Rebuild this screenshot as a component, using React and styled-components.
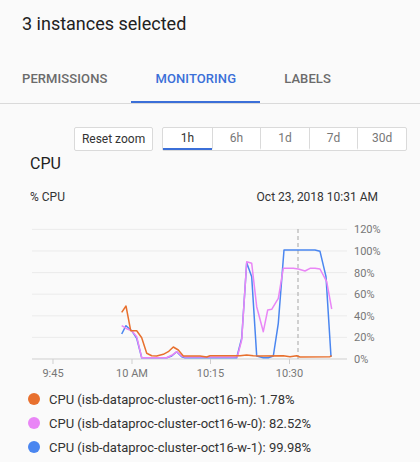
import React from "react";
import styled, { createGlobalStyle } from "styled-components";

const GlobalStyle = createGlobalStyle`
  html, body {
    margin: 0;
    padding: 0;
    background: #fafafa;
    font-family: Roboto, "Liberation Sans", Arial, sans-serif;
  }
`;

const Page = styled.div`
  width: 420px;
  height: 462px;
  overflow: hidden;
  background: #fafafa;
`;

const Header = styled.div`
  height: 54px;
  box-sizing: border-box;
  padding: 12px 22px 0;
`;

const Title = styled.h1`
  margin: 0;
  font-size: 18px;
  line-height: 24px;
  font-weight: 400;
  color: #212121;
`;

const Tabs = styled.div`
  display: flex;
  border-bottom: 1px solid #dadada;
`;

const TabsInner = styled.div`
  display: flex;
`;

const Tab = styled.div`
  height: 49px;
  box-sizing: border-box;
  padding: 1px 24px 0;
  display: flex;
  align-items: center;
  font-size: 13px;
  font-weight: 500;
  letter-spacing: 0.1px;
  text-transform: uppercase;
  color: ${({ $active }) => ($active ? "#3b6fd8" : "#6b6b6b")};
  border-bottom: 2px solid ${({ $active }) => ($active ? "#3b6fd8" : "transparent")};
  &:first-child {
    padding-left: 22px;
  }
`;

const Toolbar = styled.div`
  display: flex;
  justify-content: flex-end;
  gap: 9px;
  margin-top: 23px;
  padding-right: 13px;
`;

const Button = styled.div`
  height: 24px;
  width: 79px;
  box-sizing: border-box;
  display: flex;
  align-items: center;
  justify-content: center;
  border: 1px solid #dadada;
  border-radius: 2px;
  background: #fff;
  font-size: 12px;
  color: #333;
`;

const Segments = styled.div`
  display: flex;
  border: 1px solid #dadada;
  border-radius: 2px;
  background: #fff;
  height: 24px;
  box-sizing: border-box;
`;

const Segment = styled.div`
  width: 48.6px;
  box-sizing: border-box;
  display: flex;
  align-items: center;
  justify-content: center;
  font-size: 12px;
  color: ${({ $active }) => ($active ? "#333" : "#777")};
  border-left: ${({ $first }) => ($first ? "none" : "1px solid #dadada")};
  border-bottom: 2px solid ${({ $active }) => ($active ? "#3b6fd8" : "transparent")};
`;

const ChartTitle = styled.div`
  margin: 3px 0 0 30px;
  font-size: 16px;
  line-height: 20px;
  color: #212121;
`;

const MetaRow = styled.div`
  display: flex;
  justify-content: space-between;
  margin-top: 15px;
  padding: 0 42px 0 30px;
  font-size: 12px;
  line-height: 16px;
  color: #333;
`;

const Chart = styled.svg`
  display: block;
  margin-top: 10px;
`;

const Legend = styled.div`
  display: flex;
  flex-direction: column;
  padding: 2px 0 0 28px;
`;

const LegendRow = styled.div`
  display: flex;
  align-items: center;
  gap: 9px;
  height: 24px;
  font-size: 13px;
  color: #333;
`;

const Dot = styled.span`
  width: 12px;
  height: 12px;
  border-radius: 50%;
  background: ${({ $color }) => $color};
`;

const OFF = 215;
const ZERO = 359;
const STEP = 21.6;

const orange = [
  [121.7, 312.3], [126, 306], [130.7, 330.7], [136.7, 330.7], [141.7, 337.7],
  [146.7, 353.3], [151.7, 355.7], [156.7, 356], [163.3, 354.3], [168.3, 351.7],
  [173.3, 347], [178.3, 350], [183.3, 356], [200, 356], [206.7, 357],
  [210, 355.7], [233.3, 355.7], [240, 355.7], [246.7, 355], [253.3, 355.7],
  [260, 356], [283.3, 355.7], [290, 356.7], [296.7, 355.7], [300, 357],
  [330, 356.7], [331.7, 355.7],
];

const pink = [
  [121.7, 325.7], [126.7, 328.7], [131.7, 330.7], [136.7, 336.7], [141.7, 357.7],
  [146.7, 357.7], [166.7, 357.7], [171.7, 355.3], [176.7, 351.7], [181.7, 356],
  [185, 357], [233.3, 357], [237.3, 356.7], [241.7, 340], [246.7, 261.7],
  [251.7, 263.3], [256.7, 306.7], [263.3, 331.7], [267.7, 310], [271.7, 309.3],
  [278.3, 298.3], [283.3, 268.3], [293.3, 268.3], [298.3, 269], [305, 271],
  [310, 268.3], [315, 268.3], [320, 269], [326.7, 281.7], [331.7, 309],
];

const blue = [
  [121.7, 334], [126, 325.7], [131.7, 330.7], [136.7, 338.3], [141.7, 357.7],
  [146.7, 357.7], [166.7, 357.7], [171.7, 356], [176.7, 351.7], [181.7, 356.7],
  [185, 357.7], [233.3, 357.7], [236.7, 357.7], [241.7, 338.3], [246.7, 262.7],
  [251.7, 276.7], [256.7, 356], [263.3, 357.7], [268.3, 357.7], [273.3, 356],
  [278.3, 323.3], [284, 250], [315, 250], [320, 251.3], [326, 276.7], [331, 356.7],
];

const series = [
  { color: "#4a86f0", points: blue },
  { color: "#e986f6", points: pink },
  { color: "#e8702e", points: orange },
];

const legend = [
  { color: "#e8702e", label: "CPU (isb-dataproc-cluster-oct16-m): 1.78%" },
  { color: "#e986f6", label: "CPU (isb-dataproc-cluster-oct16-w-0): 82.52%" },
  { color: "#4a86f0", label: "CPU (isb-dataproc-cluster-oct16-w-1): 99.98%" },
];

const xTicks = [
  { x: 53, label: "9:45" },
  { x: 132, label: "10 AM" },
  { x: 210.5, label: "10:15" },
  { x: 289.5, label: "10:30" },
];

const toPath = (pts) =>
  pts.map(([x, y], i) => `${i ? "L" : "M"}${x} ${y - OFF}`).join(" ");

const CpuChart = () => (
  <Chart width="420" height="170" viewBox="0 0 420 170">
    {[0, 1, 2, 3, 4, 5, 6].map((i) => {
      const y = ZERO - OFF - i * STEP;
      return (
        <g key={i}>
          <line
            x1="32"
            x2="347"
            y1={y}
            y2={y}
            stroke={i === 0 ? "#cfcfcf" : "#ebebeb"}
            strokeWidth="1"
          />
          <text
            x="354"
            y={y + 4}
            fontSize="11"
            fill="#777"
            fontFamily="Roboto, sans-serif"
          >
            {i * 20}%
          </text>
        </g>
      );
    })}
    {xTicks.map((t) => (
      <g key={t.label}>
        <line x1={t.x} x2={t.x} y1={ZERO - OFF} y2={ZERO - OFF + 5} stroke="#cfcfcf" />
        <text
          x={t.x}
          y="161.5"
          fontSize="11"
          fill="#777"
          textAnchor="middle"
          fontFamily="Roboto, sans-serif"
        >
          {t.label}
        </text>
      </g>
    ))}
    <line
      x1="298"
      x2="298"
      y1={229 - OFF}
      y2={ZERO - OFF}
      stroke="#b5b5b5"
      strokeWidth="1.2"
      strokeDasharray="4 3"
    />
    {series.map((s) => (
      <path
        key={s.color}
        d={toPath(s.points)}
        fill="none"
        stroke={s.color}
        strokeWidth="1.5"
        strokeLinejoin="round"
      />
    ))}
  </Chart>
);

export default function App() {
  const ranges = ["1h", "6h", "1d", "7d", "30d"];
  return (
    <Page>
      <GlobalStyle />
      <Header>
        <Title>3 instances selected</Title>
      </Header>
      <Tabs>
        <TabsInner>
          <Tab>Permissions</Tab>
          <Tab $active>Monitoring</Tab>
          <Tab>Labels</Tab>
        </TabsInner>
      </Tabs>
      <Toolbar>
        <Button>Reset zoom</Button>
        <Segments>
          {ranges.map((r, i) => (
            <Segment key={r} $first={i === 0} $active={i === 0}>
              {r}
            </Segment>
          ))}
        </Segments>
      </Toolbar>
      <ChartTitle>CPU</ChartTitle>
      <MetaRow>
        <span>% CPU</span>
        <span>Oct 23, 2018 10:31 AM</span>
      </MetaRow>
      <CpuChart />
      <Legend>
        {legend.map((l) => (
          <LegendRow key={l.label}>
            <Dot $color={l.color} />
            {l.label}
          </LegendRow>
        ))}
      </Legend>
    </Page>
  );
}
